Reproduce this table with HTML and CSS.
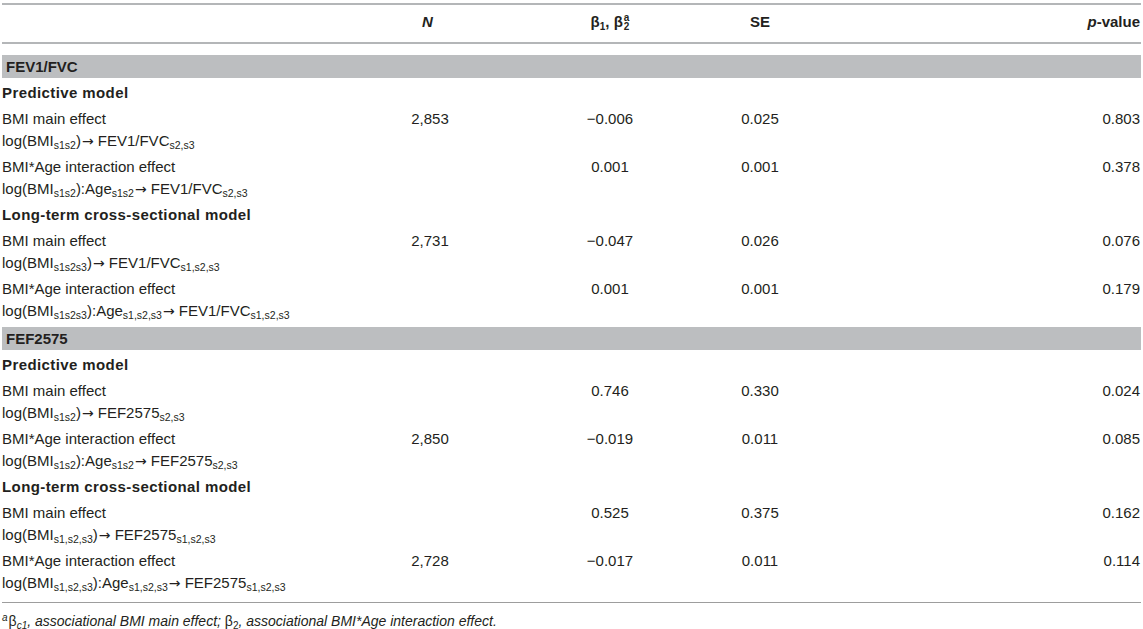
FILE: index.html
```html
<!DOCTYPE html>
<html lang="en">
<head>
<meta charset="utf-8">
<title>Table</title>
<link rel="stylesheet" href="styles.css">
</head>
<body>
<div class="table">
  <div class="row head">
    <div class="c-label"></div>
    <div class="c-n"><i>N</i></div>
    <div class="c-b">β<sub>1</sub>, β<span class="stack"><span>a</span><span>2</span></span></div>
    <div class="c-se">SE</div>
    <div class="c-p"><i>p</i>-value</div>
  </div>

  <div class="band first">FEV1/FVC</div>
  <div class="row sub"><div class="c-label">Predictive model</div></div>
  <div class="row">
    <div class="c-label"><div>BMI main effect</div><div>log(BMI<sub>s1s2</sub>)<span class="arr">→</span> FEV1/FVC<sub>s2,s3</sub></div></div>
    <div class="c-n">2,853</div><div class="c-b">−0.006</div><div class="c-se">0.025</div><div class="c-p">0.803</div>
  </div>
  <div class="row">
    <div class="c-label"><div>BMI*Age interaction effect</div><div>log(BMI<sub>s1s2</sub>):Age<sub>s1s2</sub><span class="arr">→</span> FEV1/FVC<sub>s2,s3</sub></div></div>
    <div class="c-n"></div><div class="c-b">0.001</div><div class="c-se">0.001</div><div class="c-p">0.378</div>
  </div>
  <div class="row sub"><div class="c-label">Long-term cross-sectional model</div></div>
  <div class="row">
    <div class="c-label"><div>BMI main effect</div><div>log(BMI<sub>s1s2s3</sub>)<span class="arr">→</span> FEV1/FVC<sub>s1,s2,s3</sub></div></div>
    <div class="c-n">2,731</div><div class="c-b">−0.047</div><div class="c-se">0.026</div><div class="c-p">0.076</div>
  </div>
  <div class="row">
    <div class="c-label"><div>BMI*Age interaction effect</div><div>log(BMI<sub>s1s2s3</sub>):Age<sub>s1,s2,s3</sub><span class="arr">→</span> FEV1/FVC<sub>s1,s2,s3</sub></div></div>
    <div class="c-n"></div><div class="c-b">0.001</div><div class="c-se">0.001</div><div class="c-p">0.179</div>
  </div>

  <div class="band">FEF2575</div>
  <div class="row sub"><div class="c-label">Predictive model</div></div>
  <div class="row">
    <div class="c-label"><div>BMI main effect</div><div>log(BMI<sub>s1s2</sub>)<span class="arr">→</span> FEF2575<sub>s2,s3</sub></div></div>
    <div class="c-n"></div><div class="c-b">0.746</div><div class="c-se">0.330</div><div class="c-p">0.024</div>
  </div>
  <div class="row">
    <div class="c-label"><div>BMI*Age interaction effect</div><div>log(BMI<sub>s1s2</sub>):Age<sub>s1s2</sub><span class="arr">→</span> FEF2575<sub>s2,s3</sub></div></div>
    <div class="c-n">2,850</div><div class="c-b">−0.019</div><div class="c-se">0.011</div><div class="c-p">0.085</div>
  </div>
  <div class="row sub"><div class="c-label">Long-term cross-sectional model</div></div>
  <div class="row">
    <div class="c-label"><div>BMI main effect</div><div>log(BMI<sub>s1,s2,s3</sub>)<span class="arr">→</span> FEF2575<sub>s1,s2,s3</sub></div></div>
    <div class="c-n"></div><div class="c-b">0.525</div><div class="c-se">0.375</div><div class="c-p">0.162</div>
  </div>
  <div class="row">
    <div class="c-label"><div>BMI*Age interaction effect</div><div>log(BMI<sub>s1,s2,s3</sub>):Age<sub>s1,s2,s3</sub><span class="arr">→</span> FEF2575<sub>s1,s2,s3</sub></div></div>
    <div class="c-n">2,728</div><div class="c-b">−0.017</div><div class="c-se">0.011</div><div class="c-p">0.114</div>
  </div>

  <div class="foot"><sup>a</sup><span class="greek">β</span><sub>c1</sub>, associational BMI main effect; <span class="greek">β</span><sub class="up">2</sub>, associational BMI*Age interaction effect.</div>
</div>
</body>
</html>
```
FILE: styles.css
```css
html, body {
  margin: 0;
  padding: 0;
  background: #ffffff;
}

body {
  font-family: "Liberation Sans", Arial, sans-serif;
  font-size: 15px;
  line-height: 22px;
  color: #231f20;
}

.table {
  margin: 3px 2px 0 2px;
}

.row {
  display: grid;
  grid-template-columns: 358px 140px 220px 80px 1fr;
  padding: 2px 0;
}

.c-label {
  text-align: left;
}

.c-n,
.c-b,
.c-se {
  text-align: center;
}

.c-p {
  text-align: right;
  padding-right: 1px;
}

.head {
  border-top: 2px solid #b4b6b8;
  border-bottom: 2px solid #b4b6b8;
  padding: 6px 0 9px;
  font-weight: bold;
}

.head .c-n {
  padding-right: 5px;
}

.band {
  margin-top: 3px;
  margin-bottom: 2px;
  height: 23px;
  line-height: 23px;
  background: #bcbec0;
  font-weight: bold;
  padding-left: 4px;
}

.band.first {
  margin-top: 11px;
}

.sub {
  font-weight: bold;
  letter-spacing: 0.4px;
}

.arr {
  font-family: "DejaVu Sans", sans-serif;
  font-size: 14px;
  line-height: 0;
  margin-left: 1px;
}

sub {
  font-size: 10.5px;
  line-height: 0;
  vertical-align: -3px;
}

.head sub {
  font-size: 10px;
  vertical-align: -3px;
}

.stack {
  display: inline-flex;
  flex-direction: column;
  font-size: 10px;
  line-height: 9px;
  vertical-align: 6px;
  margin-left: 1px;
}

.foot {
  margin-top: 6px;
  border-top: 1px solid #9d9d9d;
  padding-top: 8px;
  font-size: 14px;
  line-height: 20px;
  font-style: italic;
}

.foot sup {
  font-size: 10px;
  line-height: 0;
  vertical-align: 5px;
  margin-right: 1px;
}

.foot .greek {
  font-style: normal;
}

.foot sub {
  font-size: 10px;
}

.foot sub.up {
  font-style: normal;
}
```
